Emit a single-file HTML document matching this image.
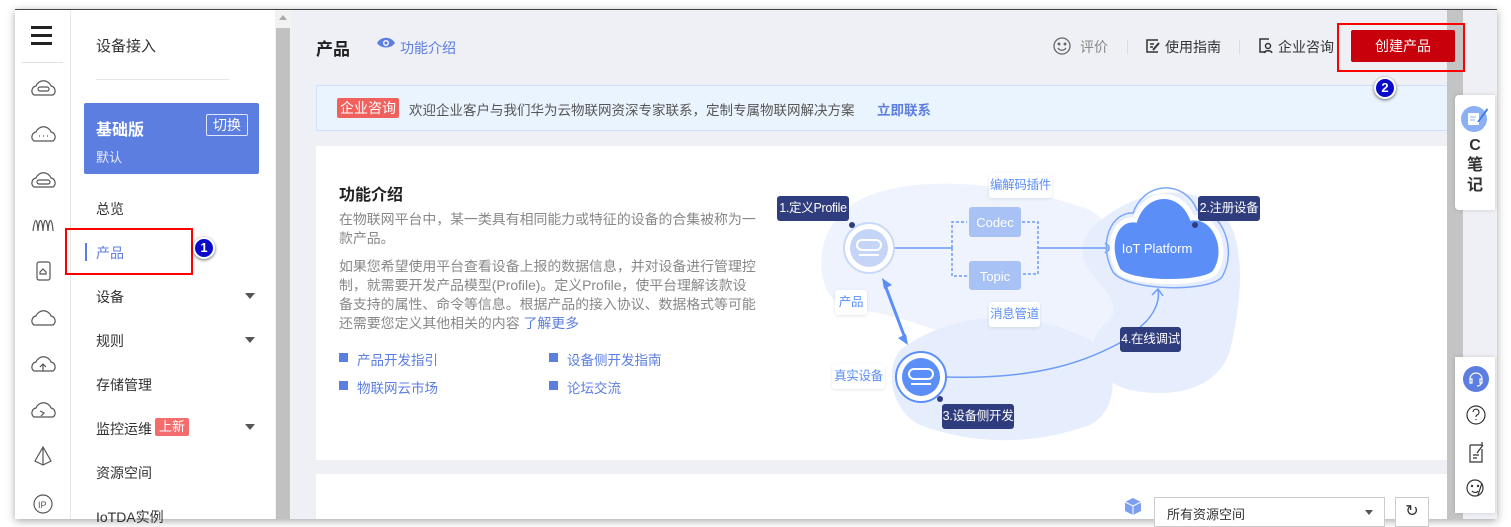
<!DOCTYPE html>
<html><head><meta charset="utf-8"><style>
*{margin:0;padding:0;box-sizing:border-box}
body{width:1511px;height:527px;background:#fff;position:relative;overflow:hidden;font-family:"Liberation Sans","Noto Sans CJK SC",sans-serif;color:#333}
.a{position:absolute}
.t{position:absolute;white-space:nowrap}
.menu .t{font-size:14px;color:#333;left:96px}
.lbl{position:absolute;background:#2f3d7e;color:#fff;font-size:12.5px;border-radius:3px;text-align:center;line-height:25px;height:25px;white-space:nowrap;letter-spacing:-0.3px}
.wl{position:absolute;background:#fff;color:#5b8ff7;font-size:12.5px;border-radius:3px;text-align:center;line-height:25px;height:25px;box-shadow:0 1px 3px rgba(0,0,0,.1);white-space:nowrap;letter-spacing:-0.3px}
.badge{position:absolute;z-index:5;width:22px;height:22px;border-radius:50%;background:#0a0acc;border:2px solid #fff;box-shadow:0 1px 3px rgba(0,0,0,.6);color:#fff;font-weight:bold;font-size:13px;text-align:center;line-height:18px}
.red{position:absolute;z-index:5;border:2px solid #f00}
</style></head><body>
<div class="a" style="left:15px;top:9px;width:1482px;height:510px;box-shadow:0 2px 8px rgba(0,0,0,.35);background:#eff0f5;border-top:1px solid #444"></div>
<div class="a" style="left:15px;top:10px;width:56px;height:509px;background:#fff;border-right:1px solid #e8e8e8"></div>
<div class="a" style="left:31px;top:26px;width:21px;height:3px;background:#222;box-shadow:0 8px 0 #222,0 16px 0 #222"></div>
<div class="a" style="left:22px;top:62px;width:41px;height:1px;background:#e0e0e0"></div>
<svg class="a" style="left:30px;top:75px" width="28" height="440" fill="none" stroke="#555" stroke-width="1.2">
<g><path d="M4 20a5 5 0 0 1 2-9a8 8 0 0 1 15 0a5 5 0 0 1 2 9z"/><rect x="8" y="12" width="11" height="4" rx="2"/></g>
<g transform="translate(0,46)"><path d="M4 20a5 5 0 0 1 2-9a8 8 0 0 1 15 0a5 5 0 0 1 2 9z"/><path d="M9 15h1M13 15h1M17 15h1"/></g>
<g transform="translate(0,92)"><path d="M4 20a5 5 0 0 1 2-9a8 8 0 0 1 15 0a5 5 0 0 1 2 9z"/><rect x="7" y="13" width="13" height="4" rx="2"/></g>
<g transform="translate(0,138)"><path d="M3 18c2-14 4-14 5 0c1-14 4-14 5 0c1-14 4-14 5 0c1-14 4-14 5 0"/></g>
<g transform="translate(0,182)"><rect x="7" y="5" width="13" height="18" rx="2"/><path d="M10 15l3-3l3 3v2h-6z"/></g>
<g transform="translate(0,230)"><path d="M4 20a5 5 0 0 1 2-9a8 8 0 0 1 15 0a5 5 0 0 1 2 9z"/></g>
<g transform="translate(0,276)"><path d="M4 20a5 5 0 0 1 2-9a8 8 0 0 1 15 0a5 5 0 0 1 2 9z"/><path d="M13 20v-7M10 16l3-3l3 3"/></g>
<g transform="translate(0,322)"><path d="M4 20a5 5 0 0 1 2-9a8 8 0 0 1 15 0a5 5 0 0 1 2 9z"/><path d="M10 14l4 2l-3 3"/></g>
<g transform="translate(0,368)"><path d="M13 4l-8 14l8 4l8-4zM13 4v18"/></g>
<g transform="translate(0,416)"><circle cx="13" cy="13" r="9"/><text x="8" y="17" font-size="9" fill="#555" stroke="none">IP</text></g>
</svg>
<div class="a" style="left:71px;top:10px;width:204px;height:509px;background:#fff"></div>
<div class="menu">
<div class="t" style="left:96px;top:35px;font-size:15px">设备接入</div>
<div class="a" style="left:96px;top:79px;width:133px;height:1px;background:#e6e6e6"></div>
<div class="a" style="left:84px;top:103px;width:175px;height:71px;background:#5c7ee0;border-radius:2px"></div>
<div class="t" style="left:96px;top:116px;font-size:16px;font-weight:bold;color:#fff">基础版</div>
<div class="t" style="left:96px;top:147px;font-size:13px;color:#e6ebff">默认</div>
<div class="t" style="left:206px;top:114px;width:42px;height:22px;border:1px solid #dfe6ff;border-radius:2px;color:#fff;font-size:14px;text-align:center;line-height:20px">切换</div>
<div class="t" style="top:199px">总览</div>
<div class="a" style="left:85px;top:243px;width:2px;height:18px;background:#5c7ee0"></div>
<div class="t" style="top:243px;color:#5c7ee0">产品</div>
<div class="t" style="top:287px">设备</div>
<div class="t" style="top:331px">规则</div>
<div class="t" style="top:375px">存储管理</div>
<div class="t" style="top:419px">监控运维</div>
<div class="t" style="left:155px;top:418px;background:#f56c6c;color:#fff;font-size:13px;padding:0 4px;border-radius:2px;line-height:18px">上新</div>
<div class="t" style="top:463px">资源空间</div>
<div class="t" style="top:507px">IoTDA实例</div>
</div>
<div class="a" style="left:245px;top:293px;border:5px solid transparent;border-top:6px solid #555"></div>
<div class="a" style="left:245px;top:337px;border:5px solid transparent;border-top:6px solid #555"></div>
<div class="a" style="left:245px;top:424px;border:5px solid transparent;border-top:6px solid #555"></div>
<div class="red" style="left:65px;top:228px;width:128px;height:47px"></div>
<div class="badge" style="left:193px;top:237px">1</div>
<div class="a" style="left:275px;top:10px;width:16px;height:509px;background:#f2f2f2"></div>
<div class="a" style="left:276px;top:28px;width:14px;height:491px;background:#c1c1c1"></div>
<div class="a" style="left:279px;top:15px;border:4px solid transparent;border-bottom:5px solid #aaa;border-top:0"></div>
<div class="t" style="left:316px;top:35px;font-size:17px;font-weight:bold;color:#222">产品</div>
<svg class="a" style="left:376px;top:36px" width="20" height="14"><path d="M1 7c4-7 14-7 18 0c-4 6-14 6-18 0z" fill="#5c7ee0"/><circle cx="10" cy="7" r="3" fill="#fff"/><circle cx="10" cy="7" r="1.6" fill="#5c7ee0"/></svg>
<div class="t" style="left:400px;top:38px;font-size:14px;color:#5c7ee0">功能介绍</div>
<svg class="a" style="left:1052px;top:36px" width="20" height="20" fill="none" stroke="#666" stroke-width="1.3"><circle cx="10" cy="10" r="8"/><circle cx="7" cy="8" r=".8" fill="#666"/><circle cx="13" cy="8" r=".8" fill="#666"/><path d="M6 12c2 3 6 3 8 0"/></svg>
<div class="t" style="left:1080px;top:37px;font-size:14px;color:#888">评价</div>
<div class="a" style="left:1127px;top:40px;width:1px;height:14px;background:#ddd"></div>
<svg class="a" style="left:1146px;top:39px" width="16" height="14" fill="none" stroke="#333" stroke-width="1.5"><path d="M12 1H1v12h11M4 5h4M4 8h3"/><path d="M7 11l6-7" stroke-width="2"/></svg>
<div class="t" style="left:1165px;top:37px;font-size:14px">使用指南</div>
<div class="a" style="left:1239px;top:40px;width:1px;height:14px;background:#ddd"></div>
<svg class="a" style="left:1258px;top:38px" width="16" height="16" fill="none" stroke="#333" stroke-width="1.5"><path d="M11 1H2v13h6"/><circle cx="10" cy="8" r="2.5"/><path d="M6 15c1-3 7-3 8 0"/></svg>
<div class="t" style="left:1278px;top:37px;font-size:14px">企业咨询</div>
<div class="a" style="left:1351px;top:30px;width:104px;height:32px;background:#c7000b;border-radius:2px;color:#fff;font-size:14px;text-align:center;line-height:32px;z-index:4">创建产品</div>
<div class="red" style="left:1337px;top:23px;width:128px;height:49px"></div>
<div class="badge" style="left:1374px;top:77px">2</div>
<div class="a" style="left:316px;top:85px;width:1137px;height:46px;background:#eaf4fe;border:1px solid #cfe0fa"></div>
<div class="t" style="left:337px;top:98px;background:#f0605d;color:#fff;font-size:14px;padding:0 3px;line-height:20px;border-radius:2px">企业咨询</div>
<div class="t" style="left:409px;top:99px;font-size:13.5px;color:#555">欢迎企业客户与我们华为云物联网资深专家联系，定制专属物联网解决方案</div>
<div class="t" style="left:877px;top:99px;font-size:13.5px;color:#5c7ee0;font-weight:bold">立即联系</div>
<div class="a" style="left:316px;top:146px;width:1137px;height:314px;background:#fff"></div>
<div class="t" style="left:339px;top:181px;font-size:16px;font-weight:bold;color:#222">功能介绍</div>
<div class="a" style="left:339px;top:210px;width:420px;font-size:13.9px;color:#888;line-height:19px">在物联网平台中，某一类具有相同能力或特征的设备的合集被称为一款产品。</div>
<div class="a" style="left:339px;top:257px;width:420px;font-size:13.9px;color:#888;line-height:19px">如果您希望使用平台查看设备上报的数据信息，并对设备进行管理控制，就需要开发产品模型(Profile)。定义Profile，使平台理解该款设备支持的属性、命令等信息。根据产品的接入协议、数据格式等可能还需要您定义其他相关的内容 <span style="color:#5c7ee0">了解更多</span></div>
<div class="a" style="left:339px;top:353px;width:9px;height:9px;background:#5c7ee0"></div>
<div class="t" style="left:357px;top:349px;font-size:13.5px;color:#5c7ee0">产品开发指引</div>
<div class="a" style="left:339px;top:381px;width:9px;height:9px;background:#5c7ee0"></div>
<div class="t" style="left:357px;top:377px;font-size:13.5px;color:#5c7ee0">物联网云市场</div>
<div class="a" style="left:549px;top:353px;width:9px;height:9px;background:#5c7ee0"></div>
<div class="t" style="left:567px;top:349px;font-size:13.5px;color:#5c7ee0">设备侧开发指南</div>
<div class="a" style="left:549px;top:381px;width:9px;height:9px;background:#5c7ee0"></div>
<div class="t" style="left:567px;top:377px;font-size:13.5px;color:#5c7ee0">论坛交流</div>
<svg class="a" style="left:760px;top:150px" width="700" height="300">
<path d="M85 60C130 20 250 30 330 60C380 90 370 180 330 200C260 230 160 160 90 160C55 150 50 90 85 60z" fill="#eef3fd"/>
<path d="M140 200C180 170 250 150 330 190C360 210 360 260 330 275C260 300 200 290 160 275C130 260 125 220 140 200z" fill="#e6eefd"/>
<path d="M330 80C370 40 430 30 460 60C490 90 480 160 470 200C460 235 420 250 370 240C330 230 320 190 350 170C370 140 300 120 330 80z" fill="#e6eefd"/>
<line x1="134" y1="98" x2="192" y2="98" stroke="#6d9bf7" stroke-width="1.5"/>
<path d="M192 98V72h15M192 98v28h15M262 72h16v52h-16" fill="none" stroke="#6d9bf7" stroke-width="1.5" stroke-dasharray="3 2"/>
<line x1="278" y1="98" x2="351" y2="98" stroke="#6d9bf7" stroke-width="1.5"/>
<path d="M345 93l6 5l-6 5" fill="none" stroke="#6d9bf7" stroke-width="1.5"/>
<rect x="209" y="57" width="52" height="30" rx="3" fill="#a8c2f6"/>
<text x="235" y="77" font-size="13" fill="#fff" text-anchor="middle" font-family="Liberation Sans">Codec</text>
<rect x="209" y="111" width="52" height="29" rx="3" fill="#a8c2f6"/>
<text x="235" y="131" font-size="13" fill="#fff" text-anchor="middle" font-family="Liberation Sans">Topic</text>
<circle cx="109" cy="98" r="25" fill="#fff" stroke="#c9d8fa" stroke-width="2"/>
<circle cx="109" cy="98" r="19" fill="#c5d5f8"/>
<rect x="97" y="90" width="24" height="10" rx="5" fill="none" stroke="#fff" stroke-width="2"/>
<line x1="99" y1="105" x2="119" y2="105" stroke="#fff" stroke-width="2"/>
<circle cx="92" cy="75" r="3" fill="#2f3d7e"/>
<path d="M125 135l20 53" stroke="#5b8ff7" stroke-width="3"/>
<path d="M122 128l10 7l-8 4zM148 195l-10-7l8-4z" fill="#5b8ff7"/>
<path d="M186 227C280 230 330 210 365 190" fill="none" stroke="#6d9bf7" stroke-width="1.5"/>
<path d="M380 177C395 165 400 150 398 140" fill="none" stroke="#6d9bf7" stroke-width="1.5"/>
<path d="M392 145l6-6l5 7" fill="none" stroke="#6d9bf7" stroke-width="1.5"/>
<circle cx="161" cy="227" r="25" fill="#fff" stroke="#5b8ff7" stroke-width="2"/>
<circle cx="161" cy="227" r="19" fill="#5b8ff7"/>
<rect x="149" y="219" width="24" height="10" rx="5" fill="none" stroke="#fff" stroke-width="2"/>
<line x1="151" y1="234" x2="171" y2="234" stroke="#fff" stroke-width="2"/>
<circle cx="180" cy="249" r="3" fill="#2f3d7e"/>
<path d="M358 120C345 95 355 68 375 70C385 40 420 38 432 68C455 65 470 100 455 122C445 135 370 135 358 120z" fill="#5b8ff7" stroke="#fff" stroke-width="5"/>
<path d="M353 122C337 92 352 62 373 63C385 30 425 30 437 60C462 60 478 100 462 127C450 142 368 142 353 122z" fill="none" stroke="#7ea6f8" stroke-width="1.5"/>
<text x="397" y="103" font-size="13" fill="#fff" text-anchor="middle" font-family="Liberation Sans">IoT Platform</text>
<circle cx="435" cy="75" r="3" fill="#2f3d7e"/>
</svg>
<div class="lbl" style="left:777px;top:196px;width:72px">1.定义Profile</div>
<div class="lbl" style="left:1198px;top:196px;width:62px">2.注册设备</div>
<div class="lbl" style="left:942px;top:404px;width:72px">3.设备侧开发</div>
<div class="lbl" style="left:1120px;top:327px;width:61px">4.在线调试</div>
<div class="wl" style="left:989px;top:173px;width:63px">编解码插件</div>
<div class="wl" style="left:989px;top:302px;width:51px">消息管道</div>
<div class="wl" style="left:835px;top:290px;width:32px">产品</div>
<div class="wl" style="left:832px;top:364px;width:53px">真实设备</div>
<div class="a" style="left:316px;top:474px;width:1137px;height:45px;background:#fff"></div>
<svg class="a" style="left:1123px;top:497px" width="20" height="20"><path d="M10 1l8 4v9l-8 4l-8-4V5z" fill="#7b9ef0"/><path d="M2 5l8 4l8-4" fill="none" stroke="#fff" stroke-width="1"/><path d="M10 9v9" stroke="#fff"/></svg>
<div class="a" style="left:1154px;top:497px;width:231px;height:30px;border:1px solid #ccc;background:#fff"></div>
<div class="t" style="left:1167px;top:504px;font-size:13px;color:#333">所有资源空间</div>
<div class="a" style="left:1365px;top:510px;border:4px solid transparent;border-top:5px solid #555"></div>
<div class="a" style="left:1395px;top:497px;width:34px;height:30px;border:1px solid #ccc;background:#fff;text-align:center;font-size:16px;line-height:28px;color:#333">&#8635;</div>
<div class="a" style="left:1447px;top:10px;width:16px;height:509px;background:#c4c4c4"></div>
<div class="a" style="left:1455px;top:95px;width:40px;height:115px;background:#fff;border-radius:4px 0 0 4px;box-shadow:0 0 4px rgba(0,0,0,.15)"></div>
<svg class="a" style="left:1460px;top:104px" width="30" height="30"><circle cx="14" cy="15" r="13" fill="#8db0f5"/><rect x="8" y="9" width="11" height="12" rx="1" fill="#fff"/><path d="M10 13h6M10 16h5" stroke="#8db0f5"/><path d="M17 18l10-14l1 2l-9 12z" fill="#3c7af0"/></svg>
<div class="a" style="left:1463px;top:136px;width:24px;text-align:center;font-size:16px;font-weight:bold;color:#333;line-height:20px">C<br>笔<br>记</div>
<div class="a" style="left:1455px;top:357px;width:40px;height:156px;background:#fff;box-shadow:0 0 4px rgba(0,0,0,.15)"></div>
<svg class="a" style="left:1462px;top:365px" width="28" height="140" fill="none" stroke="#333" stroke-width="1.2">
<circle cx="14" cy="14" r="13" fill="#5c7ee0" stroke="none"/>
<path d="M8 17v-3a6 6 0 0 1 12 0v3M8 14h2v4H8zM18 14h2v4h-2zM19 18c0 2-2 3-4 3" stroke="#fff"/>
<circle cx="14" cy="50" r="9"/><path d="M11 47a3 3 0 1 1 4 3c-1 .5-1 1-1 2M14 54v1"/>
<path d="M8 80h11l1 0v-3M8 80v17h12v-13M11 90h6M11 93h4M15 88l6-8"/>
<circle cx="13" cy="123" r="8"/><circle cx="10" cy="121" r=".6" fill="#333"/><circle cx="16" cy="121" r=".6" fill="#333"/><path d="M10 126c2 2 5 2 6 0M20 118l-4 12"/>
</svg>
</body></html>
